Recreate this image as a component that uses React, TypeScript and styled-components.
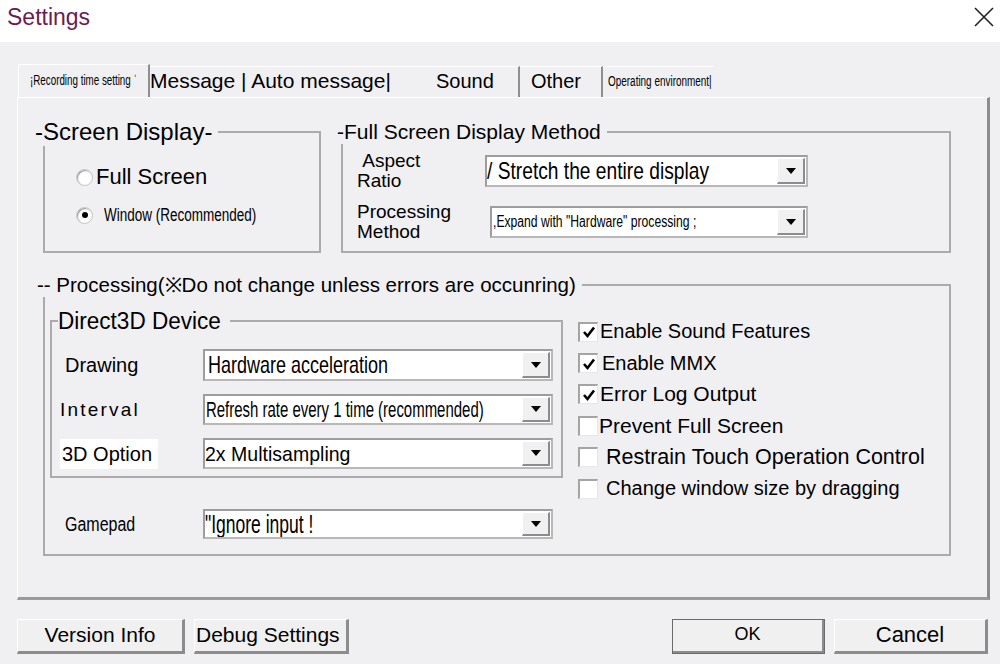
import styled, { createGlobalStyle } from 'styled-components';

const BG = '#f0eff2';

const GlobalStyle = createGlobalStyle`
  html, body { margin: 0; padding: 0; }
  body {
    font-family: "Liberation Sans", Arial, sans-serif;
    color: #000;
    background: ${BG};
  }
  * { box-sizing: border-box; }
`;

// the original uses a condensed face; squeeze Liberation Sans instead
const Narrow = styled.span<{ $scale: number }>`
  display: inline-block;
  white-space: nowrap;
  transform: scaleX(${(p) => p.$scale});
  transform-origin: left center;
`;

const Window = styled.div`
  width: 1000px;
  height: 664px;
  display: flex;
  flex-direction: column;
  overflow: hidden;
  background: ${BG};
`;

const TitleBar = styled.div`
  height: 42px;
  background: #fff;
  display: flex;
  align-items: center;
  justify-content: space-between;
  padding: 0 6px 8px 7px;
`;

const Title = styled.span`
  font-size: 23px;
  color: #6b1d4f;
`;

const Close = styled.svg`
  width: 20px;
  height: 20px;
`;

const Body = styled.div`
  flex: 1;
  padding: 22px 0 0 17px;
  display: flex;
  flex-direction: column;
`;

const TabStrip = styled.div`
  display: flex;
  align-items: flex-end;
  height: 33px;
  padding-left: 1px;
`;

const Tab = styled.div<{ $w: number; $active?: boolean; $sep?: boolean; $pad?: number; $size?: number }>`
  width: ${(p) => p.$w}px;
  height: ${(p) => (p.$active ? 33 : 31)}px;
  display: flex;
  align-items: center;
  padding-left: ${(p) => p.$pad ?? 0}px;
  padding-bottom: 2px;
  white-space: nowrap;
  font-size: ${(p) => p.$size ?? 20}px;
  border-top: 1px solid #fff;
  border-left: ${(p) => (p.$active ? '1px solid #fff' : 'none')};
  border-right: ${(p) => (p.$active || p.$sep ? '2px solid #8f8f8f' : 'none')};
`;

const TabPanel = styled.div`
  width: 973px;
  height: 503px;
  border-top: 1px solid #fff;
  border-left: 1px solid #fff;
  border-right: 3px solid #8c8c8c;
  border-bottom: 3px solid #9a9a9a;
  padding: 33px 35px 0 25px;
  display: flex;
  flex-direction: column;
`;

const TopRow = styled.div`
  display: flex;
  gap: 20px;
`;

const Group = styled.div<{ $w: number; $h: number; $mt?: number }>`
  position: relative;
  width: ${(p) => p.$w}px;
  height: ${(p) => p.$h}px;
  margin-top: ${(p) => p.$mt ?? 0}px;
  border: 2px solid #ababab;
  flex-shrink: 0;
`;

const Legend = styled.span<{ $size: number; $left: number }>`
  position: absolute;
  left: ${(p) => p.$left}px;
  top: -${(p) => Math.round(p.$size * 0.62)}px;
  font-size: ${(p) => p.$size}px;
  line-height: ${(p) => Math.round(p.$size * 1.15)}px;
  background: ${BG};
  padding-right: 6px;
  white-space: nowrap;
`;

const RadioList = styled.div`
  display: flex;
  flex-direction: column;
  gap: 14px;
  padding: 32px 0 0 31px;
`;

const RadioRow = styled.label`
  display: flex;
  align-items: center;
  height: 24px;
`;

const RadioDot = styled.span<{ $on?: boolean }>`
  width: 17px;
  height: 17px;
  border-radius: 50%;
  background: #fff;
  border: 1px solid #c4c4c4;
  box-shadow: inset 1px 1px 1px #9a9a9a;
  display: flex;
  align-items: center;
  justify-content: center;
  flex-shrink: 0;
  &::after {
    content: '';
    width: 6px;
    height: 6px;
    border-radius: 50%;
    background: ${(p) => (p.$on ? '#000' : 'transparent')};
  }
`;

const RadioText = styled.span<{ $gap: number; $size: number }>`
  margin-left: ${(p) => p.$gap}px;
  font-size: ${(p) => p.$size}px;
  white-space: nowrap;
`;

const MethodForm = styled.div`
  display: flex;
  flex-direction: column;
  gap: 11px;
  padding: 18px 0 0 14px;
`;

const FieldRow = styled.div`
  display: flex;
  align-items: center;
`;

const FieldLabel = styled.div<{ $w: number; $pad?: number; $size?: number; $white?: boolean; $spacing?: number; $lh?: number }>`
  width: ${(p) => p.$w}px;
  padding-left: ${(p) => p.$pad ?? 0}px;
  font-size: ${(p) => p.$size ?? 18}px;
  line-height: ${(p) => p.$lh ?? 22}px;
  letter-spacing: ${(p) => p.$spacing ?? 0}px;
  white-space: nowrap;
  flex-shrink: 0;
  span.chip {
    background: ${(p) => (p.$white ? '#fff' : 'transparent')};
    padding: ${(p) => (p.$white ? '4px 6px 4px 2px' : '0')};
  }
`;

const ComboBox = styled.div<{ $w: number; $h?: number }>`
  width: ${(p) => p.$w}px;
  height: ${(p) => p.$h ?? 32}px;
  display: flex;
  background: #fff;
  border: 2px solid #9d9d9d;
  border-right-color: #b8b8b8;
  border-bottom-color: #b8b8b8;
  flex-shrink: 0;
`;

const ComboText = styled.span<{ $size: number; $pad?: number }>`
  flex: 1;
  min-width: 0;
  display: flex;
  align-items: center;
  padding-left: ${(p) => p.$pad ?? 4}px;
  font-size: ${(p) => p.$size}px;
  white-space: nowrap;
  overflow: hidden;
`;

const DropButton = styled.span`
  width: 28px;
  margin: 1px;
  background: #f0f0f0;
  border-top: 1px solid #fff;
  border-left: 1px solid #fff;
  border-right: 2px solid #8c8c8c;
  border-bottom: 2px solid #8c8c8c;
  display: flex;
  align-items: center;
  justify-content: center;
  flex-shrink: 0;
  &::after {
    content: '';
    border-left: 5px solid transparent;
    border-right: 5px solid transparent;
    border-top: 6px solid #000;
  }
`;

const ProcessingBody = styled.div`
  display: flex;
  align-items: flex-start;
`;

const LeftColumn = styled.div`
  display: flex;
  flex-direction: column;
  padding: 34px 0 0 5px;
`;

const DeviceRows = styled.div`
  display: flex;
  flex-direction: column;
  gap: 13px;
  padding-top: 27px;
`;

const GamepadRow = styled(FieldRow)`
  margin-top: 31px;
`;

const CheckList = styled.div`
  display: flex;
  flex-direction: column;
  padding: 30px 0 0 15px;
`;

const CheckRow = styled.label`
  display: flex;
  align-items: center;
  height: 31.4px;
`;

const CheckBox = styled.span`
  width: 20px;
  height: 20px;
  background: #fff;
  border-top: 2px solid #a4a4a4;
  border-left: 2px solid #a4a4a4;
  border-right: 1px solid #e6e6e6;
  border-bottom: 1px solid #e6e6e6;
  display: flex;
  align-items: center;
  justify-content: center;
  flex-shrink: 0;
`;

const CheckText = styled.span<{ $gap: number; $size: number }>`
  margin-left: ${(p) => p.$gap}px;
  font-size: ${(p) => p.$size}px;
  white-space: nowrap;
`;

const Footer = styled.div`
  display: flex;
  gap: 9px;
  margin-top: 19px;
  padding-right: 12px;
`;

const Spacer = styled.div`
  flex: 1;
`;

const Button = styled.button<{ $w: number; $size: number; $default?: boolean; $left?: boolean }>`
  width: ${(p) => p.$w}px;
  height: 35px;
  background: #f0f0f0;
  font-family: "Liberation Sans", Arial, sans-serif;
  font-size: ${(p) => p.$size}px;
  color: #000;
  text-align: ${(p) => (p.$left ? 'left' : 'center')};
  padding: ${(p) => (p.$left ? '0 0 2px 1px' : '0 0 2px')};
  border-top: 1px solid #fff;
  border-left: 1px solid #fff;
  border-right: 3px solid #8c8c8c;
  border-bottom: 3px solid #8c8c8c;
  outline: ${(p) => (p.$default ? '1px solid #6a6a6a' : 'none')};
  outline-offset: -1px;
`;

function Combo({
  w,
  text,
  size,
  scale,
  pad,
  h,
}: {
  w: number;
  text: string;
  size: number;
  scale?: number;
  pad?: number;
  h?: number;
}) {
  return (
    <ComboBox $w={w} $h={h}>
      <ComboText $size={size} $pad={pad}>
        {scale ? <Narrow $scale={scale}>{text}</Narrow> : text}
      </ComboText>
      <DropButton />
    </ComboBox>
  );
}

function Check({ on, text, gap, size }: { on?: boolean; text: string; gap: number; size: number }) {
  return (
    <CheckRow>
      <CheckBox>
        {on && (
          <svg width="14" height="14" viewBox="0 0 14 14">
            <path d="M2 7 L5.5 11 L12 2.5" fill="none" stroke="#000" strokeWidth="2.6" />
          </svg>
        )}
      </CheckBox>
      <CheckText $gap={gap} $size={size}>{text}</CheckText>
    </CheckRow>
  );
}

const checks = [
  { on: true, text: 'Enable Sound Features', gap: 2, size: 20 },
  { on: true, text: 'Enable MMX', gap: 4, size: 20 },
  { on: true, text: 'Error Log Output', gap: 2, size: 21 },
  { on: false, text: 'Prevent Full Screen', gap: 1, size: 21 },
  { on: false, text: 'Restrain Touch Operation Control', gap: 8, size: 21.5 },
  { on: false, text: 'Change window size by dragging', gap: 8, size: 20 },
];

export default function App() {
  return (
    <>
      <GlobalStyle />
      <Window>
        <TitleBar>
          <Title>Settings</Title>
          <Close viewBox="0 0 20 20">
            <path d="M1 1 L19 19 M19 1 L1 19" stroke="#222" strokeWidth="1.6" />
          </Close>
        </TitleBar>
        <Body>
          <TabStrip>
            <Tab $w={132} $active $pad={11} $size={14}>
              <Narrow $scale={0.7}>¡Recording time setting ˈ</Narrow>
            </Tab>
            <Tab $w={284} $size={21}>Message | Auto message|</Tab>
            <Tab $w={86} $sep $pad={2}>Sound</Tab>
            <Tab $w={83} $sep $pad={11}>Other</Tab>
            <Tab $w={110} $pad={5} $size={14}>
              <Narrow $scale={0.71}>Operating environment|</Narrow>
            </Tab>
          </TabStrip>
          <TabPanel>
            <TopRow>
              <Group $w={278} $h={122}>
                <Legend $size={24} $left={-10}>-Screen Display-</Legend>
                <RadioList>
                  <RadioRow>
                    <RadioDot />
                    <RadioText $gap={3} $size={22}>Full Screen</RadioText>
                  </RadioRow>
                  <RadioRow>
                    <RadioDot $on />
                    <RadioText $gap={11} $size={18}>
                      <Narrow $scale={0.75}>Window (Recommended)</Narrow>
                    </RadioText>
                  </RadioRow>
                </RadioList>
              </Group>
              <Group $w={610} $h={122}>
                <Legend $size={21} $left={-6}>-Full Screen Display Method</Legend>
                <MethodForm>
                  <FieldRow>
                    <FieldLabel $w={128} $size={19} $lh={20}>
                      &nbsp;Aspect
                      <br />
                      Ratio
                    </FieldLabel>
                    <Combo w={323} text="/ Stretch the entire display" size={24} scale={0.8} pad={0} />
                  </FieldRow>
                  <FieldRow>
                    <FieldLabel $w={133} $size={19} $lh={20}>
                      Processing
                      <br />
                      Method
                    </FieldLabel>
                    <Combo w={318} text={',Expand with "Hardware" processing ;'} size={16} scale={0.76} pad={1} />
                  </FieldRow>
                </MethodForm>
              </Group>
            </TopRow>
            <Group $w={908} $h={272} $mt={31}>
              <Legend $size={20.5} $left={-8}>-- Processing(※Do not change unless errors are occunring)</Legend>
              <ProcessingBody>
                <LeftColumn>
                  <Group $w={513} $h={158}>
                    <Legend $size={23} $left={6}>
                      <Narrow $scale={0.98}>Direct3D Device</Narrow>
                    </Legend>
                    <DeviceRows>
                      <FieldRow>
                        <FieldLabel $w={151} $pad={13} $size={20}>Drawing</FieldLabel>
                        <Combo w={350} text="Hardware acceleration" size={24} scale={0.75} pad={3} />
                      </FieldRow>
                      <FieldRow>
                        <FieldLabel $w={151} $pad={8} $size={19} $spacing={2.2}>Interval</FieldLabel>
                        <Combo w={350} h={31} text="Refresh rate every 1 time (recommended)" size={22} scale={0.68} pad={1} />
                      </FieldRow>
                      <FieldRow>
                        <FieldLabel $w={151} $pad={8} $size={20} $white>
                          <span className="chip">3D Option</span>
                        </FieldLabel>
                        <Combo w={350} h={31} text="2x Multisampling" size={21} scale={0.93} pad={0} />
                      </FieldRow>
                    </DeviceRows>
                  </Group>
                  <GamepadRow>
                    <FieldLabel $w={153} $pad={15} $size={20}>
                      <Narrow $scale={0.8}>Gamepad</Narrow>
                    </FieldLabel>
                    <Combo w={350} h={30} text={'"Ignore input  !'} size={25} scale={0.7} pad={0} />
                  </GamepadRow>
                </LeftColumn>
                <CheckList>
                  {checks.map((c) => (
                    <Check key={c.text} on={c.on} text={c.text} gap={c.gap} size={c.size} />
                  ))}
                </CheckList>
              </ProcessingBody>
            </Group>
          </TabPanel>
          <Footer>
            <Button $w={168} $size={21}>Version Info</Button>
            <Button $w={155} $size={21} $left>Debug Settings</Button>
            <Spacer />
            <Button $w={153} $size={18} $default>OK</Button>
            <Button $w={154} $size={22}>Cancel</Button>
          </Footer>
        </Body>
      </Window>
    </>
  );
}
